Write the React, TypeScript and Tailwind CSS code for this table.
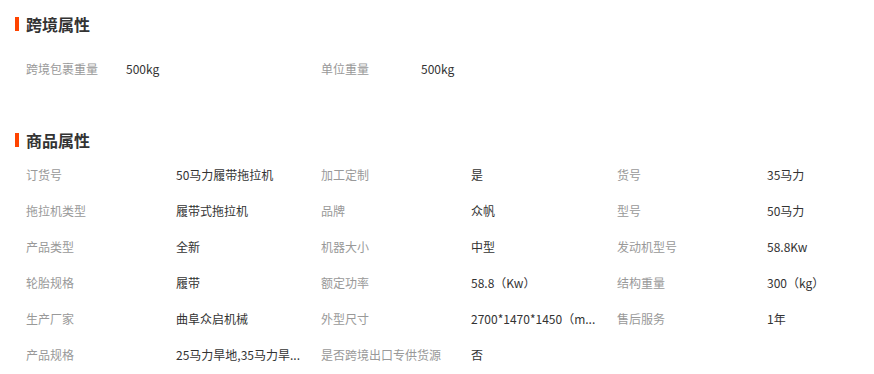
import React from "react";

type Attr = { label: string; value: string };

const crossBorder: Attr[] = [
  { label: "跨境包裹重量", value: "500kg" },
  { label: "单位重量", value: "500kg" },
];

// long values are shortened the same way the page shows them
const goods: Attr[] = [
  { label: "订货号", value: "50马力履带拖拉机" },
  { label: "加工定制", value: "是" },
  { label: "货号", value: "35马力" },
  { label: "拖拉机类型", value: "履带式拖拉机" },
  { label: "品牌", value: "众帆" },
  { label: "型号", value: "50马力" },
  { label: "产品类型", value: "全新" },
  { label: "机器大小", value: "中型" },
  { label: "发动机型号", value: "58.8Kw" },
  { label: "轮胎规格", value: "履带" },
  { label: "额定功率", value: "58.8（Kw）" },
  { label: "结构重量", value: "300（kg）" },
  { label: "生产厂家", value: "曲阜众启机械" },
  { label: "外型尺寸", value: "2700*1470*1450（m..." },
  { label: "售后服务", value: "1年" },
  { label: "产品规格", value: "25马力旱地,35马力旱..." },
  { label: "是否跨境出口专供货源", value: "否" },
];

// section heading with the orange marker bar
const SectionTitle = ({ text }: { text: string }) => (
  <div className="flex h-[20px] items-center">
    <span className="h-[14px] w-[4px] bg-[#ff4400]" />
    <h2 className="ml-[7px] text-[16px] font-bold leading-[20px] text-[#333]">{text}</h2>
  </div>
);

export default function App() {
  return (
    <div
      className="h-[374px] w-[874px] overflow-hidden bg-white pl-[15px] pt-[14px]"
      style={{ fontFamily: '"Noto Sans CJK SC", "Noto Sans", sans-serif' }}
    >
      <SectionTitle text="跨境属性" />
      <div className="mt-[17px] grid grid-cols-[295px_295px] pl-[11px]">
        {crossBorder.map((a) => (
          <div key={a.label} className="flex h-[36px] items-center text-[12px]">
            <span className="w-[100px] shrink-0 text-[#999]">{a.label}</span>
            <span className="text-[#333]">{a.value}</span>
          </div>
        ))}
      </div>

      <div className="mt-[43px]">
        <SectionTitle text="商品属性" />
      </div>
      <div className="mt-[7px] grid grid-cols-[295px_296px_250px] pl-[11px]">
        {goods.map((a) => (
          <div key={a.label} className="flex h-[36px] items-center text-[12px]">
            <span className="w-[150px] shrink-0 whitespace-nowrap text-[#999]">{a.label}</span>
            <span className="whitespace-nowrap text-[#333]">{a.value}</span>
          </div>
        ))}
      </div>
    </div>
  );
}
